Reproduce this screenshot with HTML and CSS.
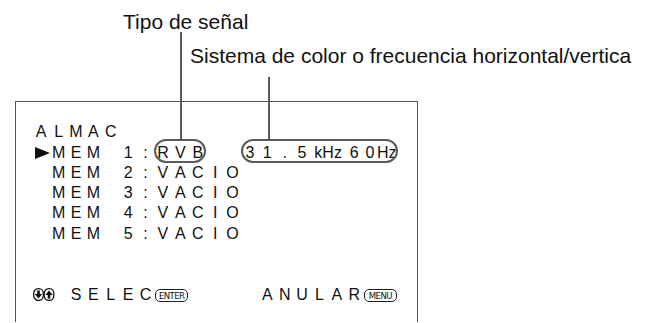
FILE: index.html
```html
<!DOCTYPE html>
<html>
<head lang="es">
    <meta charset="UTF-8">
    <title>ALMAC</title>
    <link rel="stylesheet" href="styles.css">
</head>
<body>
    <div class="page">
        <div class="cap cap-tipo">Tipo de señal</div>
        <div class="cap cap-sistema">Sistema de color o frecuencia horizontal/vertica</div>
        <div class="screen">
            <div class="row">
                <span class="c">A</span><span class="c">L</span><span class="c">M</span><span class="c">A</span><span class="c">C</span>
            </div>
            <div class="row">
                <span class="c"><svg class="cursor" width="15" height="12" viewBox="0 0 15 12"><polygon points="0,0 15,6 0,12" fill="#111"/></svg></span>
                <span class="c">M</span><span class="c">E</span><span class="c">M</span><span class="c"></span><span class="c">1</span><span class="c">:</span>
                <span class="oval oval-tipo"><span class="c">R</span><span class="c">V</span><span class="c">B</span></span>
                <span class="c"></span><span class="c"></span>
                <span class="oval oval-freq"><span class="c">3</span><span class="c">1</span><span class="c">.</span><span class="c">5</span><span class="c c2">kHz</span><span class="c">6</span><span class="c zero">0</span><span class="c unit">Hz</span></span>
            </div>
            <div class="row">
                <span class="c"></span><span class="c">M</span><span class="c">E</span><span class="c">M</span><span class="c"></span><span class="c">2</span><span class="c">:</span><span class="c">V</span><span class="c">A</span><span class="c">C</span><span class="c">I</span><span class="c">O</span>
            </div>
            <div class="row">
                <span class="c"></span><span class="c">M</span><span class="c">E</span><span class="c">M</span><span class="c"></span><span class="c">3</span><span class="c">:</span><span class="c">V</span><span class="c">A</span><span class="c">C</span><span class="c">I</span><span class="c">O</span>
            </div>
            <div class="row">
                <span class="c"></span><span class="c">M</span><span class="c">E</span><span class="c">M</span><span class="c"></span><span class="c">4</span><span class="c">:</span><span class="c">V</span><span class="c">A</span><span class="c">C</span><span class="c">I</span><span class="c">O</span>
            </div>
            <div class="row">
                <span class="c"></span><span class="c">M</span><span class="c">E</span><span class="c">M</span><span class="c"></span><span class="c">5</span><span class="c">:</span><span class="c">V</span><span class="c">A</span><span class="c">C</span><span class="c">I</span><span class="c">O</span>
            </div>
            <div class="row"></div>
            <div class="row"></div>
            <div class="row">
                <span class="c c2 keys">
                    <svg width="22" height="13" viewBox="0 0 22 13">
                        <rect x="0.7" y="0.7" width="9.6" height="11.6" rx="4.6" fill="none" stroke="#111" stroke-width="1.3"/>
                        <rect x="4.2" y="2.4" width="2.6" height="4.2" fill="#111"/>
                        <polygon points="1.8,6 9.2,6 5.5,10.4" fill="#111"/>
                        <rect x="11.2" y="0.7" width="9.6" height="11.6" rx="4.6" fill="none" stroke="#111" stroke-width="1.3"/>
                        <rect x="14.7" y="6.4" width="2.6" height="4.2" fill="#111"/>
                        <polygon points="12.3,7 19.7,7 16,2.6" fill="#111"/>
                    </svg>
                </span>
                <span class="c">S</span><span class="c">E</span><span class="c">L</span><span class="c">E</span><span class="c">C</span>
                <span class="c c2"><span class="btn">ENTER</span></span>
                <span class="c"></span><span class="c"></span><span class="c"></span><span class="c"></span>
                <span class="c">A</span><span class="c">N</span><span class="c">U</span><span class="c">L</span><span class="c">A</span><span class="c">R</span>
                <span class="c c2"><span class="btn">MENU</span></span>
            </div>
        </div>
    </div>
</body>
</html>
```
FILE: styles.css
```css
*{
    margin: 0;
    padding: 0;
}
body{
    background: #fff;
    color: #111;
    font-family: "Liberation Sans", Arial, sans-serif;
    overflow: hidden;
}
.page{
    padding-top: 10px;
}
.cap{
    font-size: 21px;
    line-height: 24px;
}
.cap-tipo{
    padding-left: 123px;
}
.cap-sistema{
    padding-left: 190px;
    margin-top: 10px;
}
.screen{
    margin: 33px 0 0 15px;
    width: 384.5px;
    height: 200.2px;
    border: 1.5px solid #555;
    border-bottom: none;
    padding: 20.3px 0 0 16.5px;
    font-size: 16px;
}
.row{
    display: flex;
    height: 20.3px;
    line-height: 20.3px;
}
.c{
    width: 17.4px;
    flex: none;
    text-align: center;
    white-space: nowrap;
}
.c2{
    width: 34.8px;
}
.zero{
    width: 14px;
}
.unit{
    width: 20.8px;
    text-align: left;
}
.cursor{
    display: block;
    margin: 4px 0 0 2.5px;
}
.oval{
    display: flex;
    position: relative;
}
.oval::after{
    content: "";
    position: absolute;
    top: -4px;
    bottom: 0;
    left: 0;
    right: 0;
    border: 2px solid #5a5a5a;
    border-radius: 12px;
}
.oval::before{
    content: "";
    position: absolute;
    bottom: calc(100% + 4px);
    width: 2px;
    background: #5a5a5a;
}
.oval-tipo::before{
    left: 26px;
    height: 107px;
}
.oval-freq::before{
    left: 27px;
    height: 62px;
}
.keys{
    display: flex;
    align-items: center;
    justify-content: flex-start;
}
.keys svg{
    display: block;
}
.btn{
    display: inline-block;
    width: 33px;
    box-sizing: border-box;
    border: 1.3px solid #222;
    border-radius: 5px;
    font-family: "DejaVu Sans Condensed", "Liberation Sans", sans-serif;
    font-stretch: condensed;
    font-size: 9.5px;
    line-height: 11px;
    letter-spacing: -0.6px;
    text-align: center;
    vertical-align: 1px;
}
```
